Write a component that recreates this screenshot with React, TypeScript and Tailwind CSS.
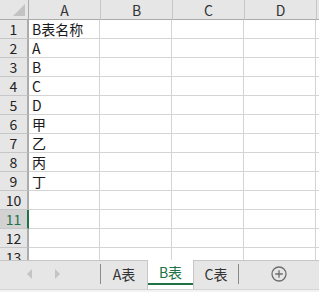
const COLS = ['A', 'B', 'C', 'D', '']
const VALUES = ['B表名称', 'A', 'B', 'C', 'D', '甲', '乙', '丙', '丁', '', '', '', '']
const SELECTED_ROW = 11

const font = { fontFamily: '"Noto Sans CJK SC", "Liberation Sans", sans-serif' }

export default function App() {
  return (
    <div className="w-[319px] h-[292px] flex flex-col bg-white overflow-hidden text-[14px] text-[#1a1a1a]" style={font}>
      {/* Grid */}
      <div className="flex-1 overflow-hidden">
        {/* Column headers */}
        <div className="flex h-[20px]">
          <div className="w-[29px] shrink-0 h-[20px] bg-[#e6e6e6] border-r border-b border-[#ababab] relative">
            <div className="absolute right-[3px] bottom-[3px] w-0 h-0 border-l-[12px] border-l-transparent border-b-[12px] border-b-[#c3c3c3]" />
          </div>
          {COLS.map((c, ci) => (
            <div
              key={ci}
              className="w-[72px] shrink-0 h-[20px] bg-[#e6e6e6] border-r border-b border-r-[#c6c6c6] border-b-[#ababab] flex items-center justify-center leading-none text-[#333]"
            >
              {c}
            </div>
          ))}
        </div>

        {/* Rows */}
        {VALUES.map((v, i) => {
          const n = i + 1
          const selected = n === SELECTED_ROW
          return (
            <div key={n} className="flex h-[19px]">
              <div
                className={`w-[29px] shrink-0 h-[19px] border-b border-b-[#c6c6c6] border-r-2 flex items-center justify-center leading-none ${
                  selected
                    ? 'bg-[#d2d2d2] text-[#217346] border-r-[#217346]'
                    : 'bg-[#e6e6e6] text-[#222] border-r-[#ababab]'
                }`}
              >
                {n}
              </div>
              {COLS.map((c, ci) => (
                <div
                  key={ci}
                  className={`shrink-0 h-[19px] border-r border-b border-[#d4d4d4] flex items-center pl-[3px] leading-none whitespace-nowrap ${
                    ci === 0 ? 'w-[71px]' : 'w-[72px]'
                  }`}
                >
                  {ci === 0 ? v : ''}
                </div>
              ))}
            </div>
          )
        })}
      </div>

      {/* Sheet tabs */}
      <div className="h-[29px] shrink-0 flex bg-[#e6e6e6] border-t border-[#c6c6c6]">
        <div className="w-[100px] flex items-center pl-[27px] gap-[23px] pb-[2px]">
          <div className="w-0 h-0 border-y-[5px] border-y-transparent border-r-[5px] border-r-[#c4c4c4]" />
          <div className="w-0 h-0 border-y-[5px] border-y-transparent border-l-[5px] border-l-[#c4c4c4]" />
        </div>
        <div className="w-px h-[20px] mt-[3px] bg-[#8a8a8a]" />
        <div className="w-[46px] flex items-center justify-center text-[#333] pb-[2px]">A表</div>
        <div className="w-[47px] -mt-px bg-white border-x border-[#c6c6c6] flex flex-col">
          <div className="flex-1 flex items-center justify-center text-[#217346] pt-px">B表</div>
          <div className="h-[2px] bg-[#217346] mb-[4px]" />
        </div>
        <div className="w-[44px] flex items-center justify-center text-[#333] pb-[2px]">C表</div>
        <div className="w-px h-[20px] mt-[3px] bg-[#8a8a8a]" />
        <div className="flex-1 flex items-center justify-center pb-[2px]">
          <svg width="16" height="16" viewBox="0 0 16 16" fill="none" stroke="#6e6e6e" strokeWidth="1.3">
            <circle cx="8" cy="8" r="7" />
            <path d="M8 4.2v7.6M4.2 8h7.6" />
          </svg>
        </div>
      </div>
      <div className="h-[3px] shrink-0 bg-[#f3f3f3] border-t border-[#d4d4d4]" />
    </div>
  )
}
